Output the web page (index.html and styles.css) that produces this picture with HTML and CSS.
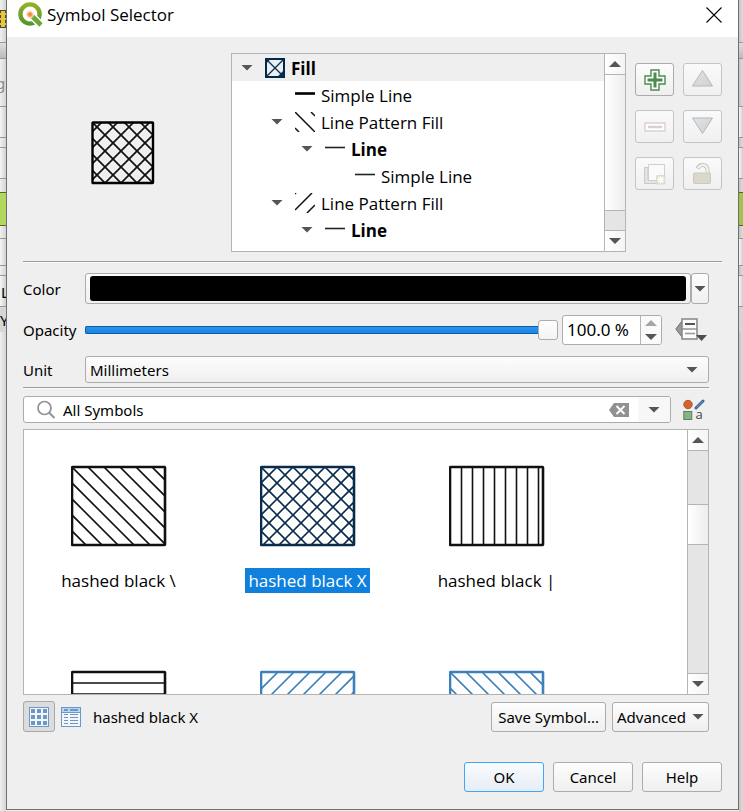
FILE: index.html
```
<!DOCTYPE html>
<html lang="en">
<head>
<meta charset="utf-8">
<meta name="viewport" content="width=device-width, initial-scale=1">
<title>Symbol Selector</title>
<link rel="stylesheet" href="styles.css">
</head>
<body>
<svg class="defs" width="0" height="0" aria-hidden="true">
  <defs>
    <path id="down" d="M0-80l96 96M0-64l96 96M0-48l96 96M0-32l96 96M0-16l96 96M0 0l96 96M0 16l96 96M0 32l96 96M0 48l96 96M0 64l96 96"/>
    <path id="up" d="M-16 16L16-16M-16 32L32-16M-16 48L48-16M-16 64L64-16M-16 80L80-16M-16 96L96-16M-16 112L112-16M-16 128L128-16M-16 144L144-16M-16 160L160-16M-16 176L176-16M-16 192L192-16"/>
    <linearGradient id="ring" x1="0" y1="0" x2="0" y2="1"><stop offset="0" stop-color="#93b023"/><stop offset="1" stop-color="#589632"/></linearGradient>
    <radialGradient id="core"><stop offset="0" stop-color="#ee7913"/><stop offset=".4" stop-color="#f4a35c"/><stop offset="1" stop-color="#fff" stop-opacity="0"/></radialGradient>
    <linearGradient id="tri" x1="0" y1="0" x2="1" y2="1"><stop offset="0" stop-color="#e2e4e6"/><stop offset="1" stop-color="#cdd1d5"/></linearGradient>
  </defs>
</svg>

<div class="desktop">
  <div class="strip strip-left" aria-hidden="true">
    <div class="band band-top"><span class="chip"></span></div>
    <div class="band band-tool"></div>
    <div class="band band-text"><span class="dim">g</span></div>
    <div class="band band-field"></div>
    <div class="band band-gap"></div>
    <div class="band band-field"></div>
    <div class="band band-gap"></div>
    <div class="band band-green"></div>
    <div class="band band-gap"></div>
    <div class="band band-field short"></div>
    <div class="band band-gap"></div>
    <div class="band band-field"><span>L</span></div>
    <div class="band band-row"><span>Y</span></div>
  </div>

  <main class="dialog">
    <header class="titlebar">
      <svg class="logo" width="26" height="26" viewBox="0 0 26 26" aria-hidden="true">
        <circle cx="13" cy="12" r="9.6" fill="#fff" stroke="url(#ring)" stroke-width="4.400"/>
        <path d="M16 15l8 8" stroke="#fff" stroke-width="7.500"/>
        <path d="M15.500 14.500L24 23" stroke="#6aa638" stroke-width="4.600"/>
        <circle cx="13" cy="12.500" r="5" fill="url(#core)"/>
      </svg>
      <h1>Symbol Selector</h1>
      <button class="close" type="button" aria-label="Close"><svg width="16" height="16" viewBox="0 0 16 16"><path d="M.5.5l15 15M15.500.5l-15 15" stroke="#000" stroke-width="1.100"/></svg></button>
    </header>

    <div class="content">
      <section class="layers">
        <div class="preview">
          <svg width="64" height="64" viewBox="0 0 64 64" fill="none" stroke="#000">
            <svg x="1" y="1" width="61" height="61" viewBox="1 1 61 61" stroke="#111" stroke-width="1.700"><use href="#down"/><use href="#up" x="-4"/></svg>
            <rect x="1.500" y="1.500" width="60.500" height="60.500" rx=".5" stroke-width="2.400"/>
          </svg>
        </div>
        <div class="tree-frame">
          <ul class="tree" role="tree">
            <li class="selected" role="treeitem"><i class="caret"></i><svg class="ico" viewBox="0 0 20 20"><rect x="1" y="1" width="18" height="18" fill="#e9eff3" stroke="#00284a" stroke-width="2"/><path d="M2 2l16 16M2 18L18 2M2 4l2-2M18 14l-4 4h4z" stroke="#0c2f4e" stroke-width="1.300" fill="#0c2f4e"/></svg><b>Fill</b></li>
            <li class="l1" role="treeitem"><i class="caret none"></i><svg class="ico" viewBox="0 0 20 20"><path d="M0 8.500h20" stroke="#000" stroke-width="2.600"/></svg><span>Simple Line</span></li>
            <li class="l1" role="treeitem"><i class="caret"></i><svg class="ico" viewBox="0 0 20 20"><path d="M0 0l20 20M0 16l4 4M16 0l4 4" stroke="#111" stroke-width="1.500"/></svg><span>Line Pattern Fill</span></li>
            <li class="l2" role="treeitem"><i class="caret"></i><svg class="ico" viewBox="0 0 20 20"><path d="M0 8.500h20" stroke="#222" stroke-width="1.600"/></svg><b>Line</b></li>
            <li class="l3" role="treeitem"><i class="caret none"></i><svg class="ico" viewBox="0 0 20 20"><path d="M0 8.500h20" stroke="#222" stroke-width="1.600"/></svg><span>Simple Line</span></li>
            <li class="l1" role="treeitem"><i class="caret"></i><svg class="ico" viewBox="0 0 20 20"><path d="M0 17L17 0M12 20l8-8M0 1l1-1" stroke="#111" stroke-width="1.500"/></svg><span>Line Pattern Fill</span></li>
            <li class="l2" role="treeitem"><i class="caret"></i><svg class="ico" viewBox="0 0 20 20"><path d="M0 8.500h20" stroke="#222" stroke-width="1.600"/></svg><b>Line</b></li>
            <li class="l3" role="treeitem"><i class="caret none"></i><svg class="ico" viewBox="0 0 20 20"><path d="M0 8.500h20" stroke="#222" stroke-width="1.600"/></svg><span>Simple Line</span></li>
          </ul>
          <div class="scroll tree-scroll">
            <button type="button" aria-label="Scroll up"><i class="arrow up"></i></button>
            <div class="thumb"></div>
            <div class="trough"></div>
            <button type="button" aria-label="Scroll down"><i class="arrow"></i></button>
          </div>
        </div>
        <div class="tools">
          <button type="button" aria-label="Add symbol layer"><svg width="22" height="22" viewBox="1 1 22 22"><path d="M8 2h8v6h6v8h-6v6H8v-6H2V8h6z" fill="#fff" stroke="#4d8a50" stroke-width="1.400"/><path d="M12 4.500v15M4.500 12h15" stroke="#4d8a50" stroke-width="3"/></svg></button>
          <button type="button" disabled aria-label="Move up"><svg width="22" height="22" viewBox="1 1 22 22"><path d="M11.500 2.500L21.500 18H1.500z" fill="url(#tri)" stroke="#b4b7ba"/></svg></button>
          <button type="button" disabled aria-label="Remove symbol layer"><svg width="22" height="22" viewBox="1 1 22 22"><path d="M2 8h20v8H2z" fill="#fff" stroke="#dccfd0" stroke-width="1.400"/><path d="M5 12h14" stroke="#dccfd0" stroke-width="2.500"/></svg></button>
          <button type="button" disabled aria-label="Move down"><svg width="22" height="22" viewBox="1 1 22 22"><path d="M1.500 3h20l-10 15.500z" fill="url(#tri)" stroke="#b4b7ba"/></svg></button>
          <button type="button" disabled aria-label="Duplicate layer"><svg width="22" height="22" viewBox="1 0 22 22"><path d="M1.500 4.500H5v13h13v3H1.500z" fill="#e4e4e4" stroke="#c9c9c9"/><path d="M5.500 1.500h16v16h-16z" fill="#fafafa" stroke="#cfcfcf"/><rect x="13" y="12" width="9.500" height="9.500" rx="1.500" fill="#dcdbcc"/><path d="M17.700 13v7.500M14 16.700h7.500M15 14l5.500 5.500M20.500 14L15 19.500" stroke="#fff" stroke-width="1.300"/></svg></button>
          <button type="button" disabled aria-label="Unlock layer color"><svg width="22" height="22" viewBox="1 1 22 22"><path d="M6.500 6.500C8 3.500 10 2.500 12.500 3c3 .6 4.500 3 4 7.500" fill="none" stroke="#c6c6c3" stroke-width="4"/><path d="M7 6C8.500 3.500 10 2.700 12.500 3c3 .6 4.500 3 4 8" fill="none" stroke="#f4f4f4" stroke-width="2"/><rect x="2.500" y="11" width="17" height="10.500" rx="1" fill="#dad8ca" stroke="#cbc9bc"/></svg></button>
        </div>
      </section>

      <hr>

      <form class="form">
        <label for="color">Color</label>
        <div class="color-row">
          <button id="color" class="color" type="button"><span class="swatch"></span></button>
          <button class="color-menu" type="button" aria-label="Color menu"><i class="arrow"></i></button>
        </div>

        <label for="opacity">Opacity</label>
        <div class="opacity-row">
          <input id="opacity" type="range" min="0" max="100" value="100">
          <div class="spin">
            <input type="text" value="100.0 %" aria-label="Opacity value">
            <div class="steps">
              <button type="button" disabled aria-label="Increase"><i class="arrow up"></i></button>
              <button type="button" aria-label="Decrease"><i class="arrow"></i></button>
            </div>
          </div>
          <button class="override" type="button" aria-label="Data defined override"><svg width="32" height="24" viewBox="0 0 32 24"><path d="M7 3v16L.8 11z" fill="#999" stroke="#6d6d6d"/><rect x="7" y="1" width="15" height="20" fill="#fcfcfc" stroke="#8d8d8d" stroke-width="1.600"/><path d="M7 11h15" stroke="#8d8d8d" stroke-width="1.400"/><path d="M10 6h10" stroke="#555" stroke-width="2"/><path d="M10 15.500h10" stroke="#999" stroke-width="1.600"/><path d="M21 17h11l-5.500 6z" fill="#4d4d4d"/></svg></button>
        </div>

        <label for="unit">Unit</label>
        <div class="select">
          <select id="unit"><option>Millimeters</option><option>Pixels</option><option>Points</option></select>
        </div>
      </form>

      <div class="narrow">
        <hr>
        <div class="filter-row">
          <div class="search">
            <svg width="20" height="20" viewBox="0 0 20 20" aria-hidden="true"><circle cx="8.500" cy="8" r="6.500" fill="none" stroke="#929292" stroke-width="1.700"/><path d="M13 12.500l5.500 5.500" stroke="#929292" stroke-width="2"/></svg>
            <input type="text" value="All Symbols" aria-label="Symbol group">
            <button class="clear" type="button" aria-label="Clear"><svg width="20" height="14" viewBox="0 0 20 14"><path d="M5 0h15v14H5L0 7z" fill="#919191"/><path d="M7.500 3l8 8M15.500 3l-8 8" stroke="#fff" stroke-width="2"/></svg></button>
            <button class="drop" type="button" aria-label="Show groups"><i class="arrow"></i></button>
          </div>
          <button class="manager" type="button" aria-label="Style manager"><svg width="22" height="22" viewBox="0 0 22 22"><circle cx="5" cy="5.500" r="4.200" fill="#d2652f" stroke="#b5522a"/><path d="M13 9l7-7" stroke="#41689b" stroke-width="3" stroke-linecap="round"/><path d="M13.500 8.500L20 2" stroke="#6f97c4" stroke-width="1"/><rect x=".8" y="12.500" width="8" height="8" fill="#8bb08c" stroke="#4f8a55"/><text x="12.500" y="20">a</text></svg></button>
        </div>

        <div class="gallery">
          <ul class="symbols">
            <li><svg width="96" height="82" viewBox="1 0 96 82" class="black"><svg x="2" y="2" width="92" height="78" viewBox="2 2 92 78"><use href="#down"/></svg><rect x="2" y="2" width="93" height="78" rx=".5"/></svg><span>hashed black \</span></li>
            <li class="chosen"><svg width="96" height="82" viewBox="1 0 96 82" class="navy"><svg x="2" y="2" width="92" height="78" viewBox="2 2 92 78"><use href="#down"/><use href="#up" x="4"/></svg><rect x="2" y="2" width="93" height="78" rx=".5"/></svg><span>hashed black X</span></li>
            <li><svg width="96" height="82" viewBox="1 0 96 82" class="black"><path d="M13.500 2v78M24.500 2v78M35.500 2v78M46.500 2v78M57.500 2v78M68.500 2v78M79.500 2v78M90.500 2v78"/><rect x="2" y="2" width="93" height="78" rx=".5"/></svg><span>hashed black |</span></li>
            <li><svg width="96" height="82" viewBox="1 0 96 82" class="black"><path d="M2 13h92M2 24h92M2 35h92M2 46h92M2 57h92M2 68h92"/><rect x="2" y="2" width="93" height="78" rx=".5"/></svg></li>
            <li><svg width="96" height="82" viewBox="1 0 96 82" class="blue"><svg x="2" y="2" width="92" height="78" viewBox="2 2 92 78"><use href="#up" x="5"/></svg><rect x="2" y="2" width="93" height="78" rx=".5"/></svg></li>
            <li><svg width="96" height="82" viewBox="1 0 96 82" class="blue"><svg x="2" y="2" width="92" height="78" viewBox="2 2 92 78"><use href="#down"/></svg><rect x="2" y="2" width="93" height="78" rx=".5"/></svg></li>
          </ul>
          <div class="scroll gallery-scroll">
            <button type="button" aria-label="Scroll up"><i class="arrow up"></i></button>
            <div class="trough before"></div>
            <div class="thumb"></div>
            <div class="trough"></div>
            <button type="button" aria-label="Scroll down"><i class="arrow"></i></button>
          </div>
        </div>

        <div class="status">
          <button class="view on" type="button" aria-label="Icon view"><svg width="20" height="20" viewBox="0 0 20 20"><rect x=".5" y=".5" width="19" height="19" fill="#f2f6fa" stroke="#6c98c8"/><path d="M2 4h16M2 10h16M2 16h16" stroke="#6c98c8" stroke-width="4" stroke-dasharray="4 2"/></svg></button>
          <button class="view" type="button" aria-label="List view"><svg width="20" height="20" viewBox="0 0 20 20"><rect x=".5" y=".5" width="19" height="19" fill="#f2f6fa" stroke="#6c98c8"/><path d="M1 1h18v4H1z" fill="#b9d8ee"/><path d="M1 5.500h18" stroke="#6c98c8"/><path d="M3 3h4M9 3h8" stroke="#6c98c8" stroke-width="2"/><path d="M3 7.500h4M9 7.500h8M3 10.500h4M9 10.500h8M3 13.500h4M9 13.500h8M3 16.500h4M9 16.500h8" stroke="#6c98c8"/></svg></button>
          <output>hashed black X</output>
          <button class="btn save" type="button">Save Symbol...</button>
          <button class="btn advanced" type="button">Advanced<i class="arrow"></i></button>
        </div>
      </div>

      <footer class="actions">
        <button class="btn primary" type="button">OK</button>
        <button class="btn" type="button">Cancel</button>
        <button class="btn" type="button">Help</button>
      </footer>
    </div>
  </main>

  <div class="strip strip-right" aria-hidden="true">
    <div class="band band-top"></div>
    <div class="band band-tool"></div>
    <div class="band band-text"></div>
    <div class="band band-field"></div>
    <div class="band band-gap"></div>
    <div class="band band-field"></div>
    <div class="band band-gap"></div>
    <div class="band band-green"></div>
    <div class="band band-gap"></div>
    <div class="band band-field short"></div>
    <div class="band band-gap"></div>
    <div class="band band-field"></div>
    <div class="band band-row"></div>
  </div>
</div>
</body>
</html>
```
FILE: styles.css
```
:root {
  --ui: "Noto Sans", "Open Sans", sans-serif;
  --face: #efefef;
  --edge: #b4b4b4;
  --btn-edge: #acacac;
  --arrow: #555;
}

* { box-sizing: border-box; }

body {
  margin: 0;
  background: var(--face);
  color: #000;
  font: 15px/20px var(--ui);
}

button, input, select { font: inherit; color: inherit; }
button { padding: 0; }
ul { list-style: none; margin: 0; padding: 0; }
svg { display: block; flex: none; }
.defs { position: absolute; }

.desktop {
  display: grid;
  grid-template-columns: 6px 1fr 4px;
  min-height: 100vh;
}

/* Main window that shows at both sides of the dialog */
.strip { overflow: hidden; background: linear-gradient(90deg, #f0f0f0, #d4d4d4); }
.strip-right { background: linear-gradient(90deg, #c4c4c4, #dedede); }
.band { overflow: hidden; border-bottom: 1px solid #999; }
.band-top { height: 43px; padding-top: 10px; }
.band-tool { height: 16px; background: linear-gradient(#dedede, #bbb); }
.band-text { height: 48px; padding-top: 14px; }
.band-field { height: 31px; background: linear-gradient(90deg, #f6f6f6, #d0d0d0); }
.band-field.short { height: 27px; }
.band-gap { height: 10px; }
.band-green { height: 34px; border: solid #4f6b1f; border-width: 1px 0; background: #b0d85c; }
.band-gap:has(+ .band-green) { height: 13px; border: 0; }
.band-green + .band-gap { height: 13px; }
.band-row { height: 25px; border: 0; background: #d6d6d6; }
.band span { display: block; }
.band-field span { padding: 6px 0 0 1px; }
.band-row span { padding-top: 3px; }
.band .dim { margin-left: -4px; color: #888; }
.band .chip { height: 18px; border: 1px dashed #444; background: #e6c633; }
.strip-right .band-green { background: #a1c24f; }

.dialog {
  display: flex;
  flex-direction: column;
  margin-bottom: 1px;
  border: solid #707070;
  border-width: 0 1px 1px;
  background: var(--face);
}

.titlebar {
  display: flex;
  align-items: center;
  height: 37px;
  padding: 0 16px 8px 10px;
  background: #fff;
}
.titlebar h1 { margin: 0 auto 0 4px; padding-top: 1px; font: 17px/24px "Open Sans", sans-serif; }
.close { border: 0; background: none; }

.content { display: flex; flex-direction: column; flex: 1; padding: 16px 16px 17px; }

hr { width: 100%; height: 2px; margin: 0; border: 0; border-top: 1px solid #9b9b9b; background: #fafafa; }

.layers { display: flex; margin-bottom: 9px; }
.preview { display: flex; justify-content: center; flex: 0 0 208px; padding: 68px 9px 0 0; }

.tree-frame { display: flex; flex: 1; height: 199px; overflow: hidden; border: 1px solid var(--edge); background: #fff; }
.tree { flex: 1; font: 17px/25px "Open Sans", sans-serif; }
.tree li { display: flex; align-items: center; height: 27px; padding-left: 9px; white-space: nowrap; }
.tree b, .tree span { padding-top: 2px; }
.tree .selected { background: var(--face); }
.tree .l1 { padding-left: 39px; }
.tree .l2 { padding-left: 69px; }
.tree .l3 { padding-left: 99px; }
.tree .ico { width: 20px; height: 20px; margin: 0 6px 0 12px; }
.caret, .arrow { flex: none; width: 12px; height: 6px; background: var(--arrow); clip-path: polygon(0 0, 100% 0, 50% 100%); }
.caret.none { visibility: hidden; }
.arrow.up { clip-path: polygon(50% 0, 100% 100%, 0 100%); }

.scroll { display: flex; flex-direction: column; flex: none; width: 21px; border-left: 1px solid var(--edge); }
.scroll button {
  display: grid;
  place-items: center;
  height: 20px;
  border: 0;
  background: linear-gradient(90deg, #fff, #f4f4f4);
}
.scroll .thumb { border: solid var(--edge); border-width: 1px 0; background: linear-gradient(90deg, #fff, #ededed); }
.scroll .trough { flex: 1; background: #e5e5e5; }
.tree-scroll .thumb { height: 137px; }
.gallery-scroll .before { flex: 0 0 54px; border-top: 1px solid var(--edge); }
.gallery-scroll .thumb { height: 41px; }
.scroll button:last-child { height: 21px; border-top: 1px solid var(--edge); }

.tools {
  display: grid;
  grid-template-columns: 39px 39px;
  grid-auto-rows: 33px;
  gap: 14px 9px;
  padding: 10px 0 0 9px;
}
.tools button, .btn, .color, .color-menu, .select select {
  border: 1px solid var(--btn-edge);
  border-radius: 3px;
  background: linear-gradient(#fdfdfd, #efefef);
}
.tools button { display: grid; place-items: center; }
.tools button:disabled { border-color: #c4c4c4; background: linear-gradient(#fafafa, #f0f0f0); }

.form {
  display: grid;
  grid-template-columns: 62px 1fr;
  align-items: center;
  row-gap: 11px;
  margin: 10px 13px 4px 0;
}
.color-row { display: flex; }
.color { flex: 1; height: 31px; padding: 2px 4px; }
.swatch { display: block; height: 25px; border-radius: 3px; background: #000; }
.color-menu { display: grid; place-items: center; width: 18px; }

.opacity-row { display: flex; align-items: center; }
.opacity-row input[type="range"] { flex: 1; min-width: 0; height: 22px; margin: 0; appearance: none; background: none; }
input[type="range"]::-webkit-slider-runnable-track {
  height: 8px;
  border: 1px solid #0a5ca8;
  border-right: 0;
  border-radius: 2px;
  background: linear-gradient(#2d93e8, #1583e8);
}
input[type="range"]::-webkit-slider-thumb {
  appearance: none;
  width: 20px;
  height: 20px;
  margin-top: -7px;
  border: 1px solid var(--btn-edge);
  border-radius: 3px;
  background: linear-gradient(#fff, #f3f3f3);
}
.spin {
  display: flex;
  width: 100px;
  height: 30px;
  margin: 0 13px 0 4px;
  overflow: hidden;
  border: 1px solid var(--btn-edge);
  border-radius: 3px;
  background: #fff;
}
.spin input { flex: 1; min-width: 0; padding: 0 4px; border: 0; background: none; font-size: 17px; }
.steps { display: grid; width: 21px; border-left: 1px solid var(--edge); }
.steps button { display: grid; place-items: center; border: 0; background: #fafafa; }
.steps button:disabled .arrow { background: #a5a5a5; }
.override { margin-right: 2px; border: 0; background: none; }

.select { display: grid; align-items: center; }
.select select { grid-area: 1 / 1; width: 100%; height: 27px; padding: 0 4px; appearance: none; }
.select::after {
  content: "";
  grid-area: 1 / 1;
  justify-self: end;
  width: 12px;
  height: 6px;
  margin-right: 11px;
  background: var(--arrow);
  clip-path: polygon(0 0, 100% 0, 50% 100%);
  pointer-events: none;
}

.narrow { margin-right: 13px; }
.filter-row { display: flex; align-items: center; gap: 12px; margin: 7px 0 6px; }
.search {
  display: flex;
  align-items: center;
  flex: 1;
  height: 27px;
  padding-left: 12px;
  overflow: hidden;
  border: 1px solid var(--btn-edge);
  border-radius: 3px;
  background: #fff;
}
.search input { flex: 1; min-width: 0; padding: 0 7px; border: 0; background: none; }
.clear { border: 0; background: none; }
.drop { display: grid; place-items: center; align-self: stretch; width: 32px; margin-left: 9px; border: 0; background: #f7f7f7; }
.manager { width: 26px; border: 0; background: none; }
.manager text { font: 13px "Open Sans", sans-serif; fill: #444; }

.gallery { display: flex; height: 266px; overflow: hidden; border: 1px solid var(--edge); background: #fff; }
.symbols {
  display: grid;
  grid-template-columns: repeat(auto-fill, 189px);
  grid-auto-rows: 205px;
  flex: 1;
  font: 17px/25px "Open Sans", sans-serif;
}
.symbols li { display: flex; flex-direction: column; align-items: center; gap: 21px; padding-top: 35px; }
.symbols svg { fill: none; stroke-width: 1.600; }
.symbols rect { stroke-width: 2.600; }
.symbols .black { stroke: #111; }
.symbols .navy { stroke: #0a2c4c; }
.symbols .blue { stroke: #3d80bb; }
.symbols span { padding: 0 3px; }
.chosen span { background: #0f81dc; color: #fff; }

.status { display: flex; align-items: center; margin-top: 6px; }
.view { display: grid; place-items: center; width: 32px; height: 31px; border: 1px solid transparent; border-radius: 3px; background: none; }
.view.on { border-color: #a8a8a8; background: #dcdcdc; }
.status output { margin: 0 auto 0 6px; }

.btn { height: 30px; padding: 0 4px; }
.save { padding: 0 6px; }
.advanced { display: flex; align-items: center; gap: 6px; margin-left: 6px; }

.actions { display: flex; justify-content: flex-end; gap: 9px; margin-top: auto; }
.actions .btn { width: 80px; }
.btn.primary { border-color: #42a5f5; background: linear-gradient(#fafcfe, #e4edf5); }
```
